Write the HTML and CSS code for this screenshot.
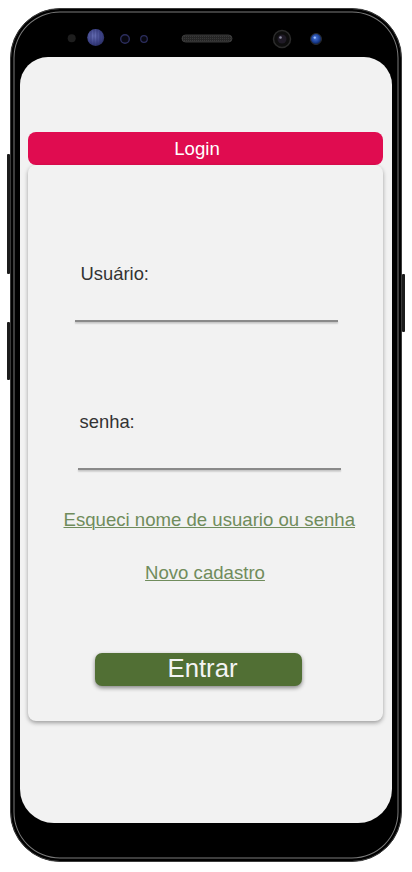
FILE: index.html
```html
<!DOCTYPE html>
<html lang="pt-BR">
<head>
<meta charset="utf-8">
<title>Login</title>
<link rel="stylesheet" href="styles.css">
</head>
<body>
<div class="phone">
  <span class="side-btn side-btn-l1"></span>
  <span class="side-btn side-btn-l2"></span>
  <span class="side-btn side-btn-r"></span>
  <svg class="bezel-top" width="372" height="49" viewBox="0 0 372 49" aria-hidden="true">
    <defs>
      <radialGradient id="lensG" cx="0.4" cy="0.4" r="0.7">
        <stop offset="0" stop-color="#6a72b8"/>
        <stop offset="0.6" stop-color="#3e4488"/>
        <stop offset="1" stop-color="#262a5a"/>
      </radialGradient>
      <radialGradient id="blueG" cx="0.45" cy="0.4" r="0.6">
        <stop offset="0" stop-color="#4a78e0"/>
        <stop offset="0.7" stop-color="#173a8c"/>
        <stop offset="1" stop-color="#0c1c44"/>
      </radialGradient>
      <pattern id="mesh" width="2" height="2" patternUnits="userSpaceOnUse">
        <rect width="2" height="2" fill="#262626"/>
        <rect width="1" height="1" fill="#3a3a3a"/>
      </pattern>
    </defs>
    <circle cx="51.7" cy="30.3" r="4" fill="#1e1e1e"/>
    <circle cx="75.7" cy="29.5" r="8.5" fill="url(#lensG)"/>
    <path d="M71 23 v13 M74 21.5 v16 M77 21.5 v16 M80 23 v13" stroke="#2f3470" stroke-width="0.8" opacity="0.7"/>
    <circle cx="105" cy="31" r="4.3" fill="#07070f" stroke="#2c2e5e" stroke-width="1.4"/>
    <circle cx="124" cy="31" r="3.3" fill="#07070f" stroke="#2c2e5e" stroke-width="1.2"/>
    <rect x="162" y="27" width="50" height="7" rx="3.5" fill="url(#mesh)" stroke="#444" stroke-width="0.8"/>
    <circle cx="262" cy="31" r="8.5" fill="#0d0d0d" stroke="#2b2b2b" stroke-width="1.5"/>
    <circle cx="262" cy="31" r="4.5" fill="#1f1a26"/>
    <circle cx="260.5" cy="29.5" r="1.3" fill="#8a8aa0"/>
    <circle cx="296" cy="31" r="5.5" fill="url(#blueG)" stroke="#2a2a2a" stroke-width="1"/>
    <circle cx="294.8" cy="29.6" r="1.2" fill="#9fc0ff"/>
  </svg>
  <main class="screen">
    <div class="login-head">Login</div>
    <form class="card">
      <label class="field field-user">
        <span class="field-label">Usuário:</span>
        <input class="field-input" type="text">
        <span class="field-line"></span>
      </label>
      <label class="field field-pass">
        <span class="field-label">senha:</span>
        <input class="field-input" type="password">
        <span class="field-line"></span>
      </label>
      <a class="link link-forgot" href="#">Esqueci nome de usuario ou senha</a>
      <a class="link link-new" href="#">Novo cadastro</a>
      <button class="enter-btn" type="button">Entrar</button>
    </form>
  </main>
</div>
</body>
</html>
```
FILE: styles.css
```css
html, body {
  margin: 0;
  padding: 0;
  background: #ffffff;
}

body {
  font-family: "Liberation Sans", Arial, sans-serif;
  width: 412px;
  height: 872px;
  overflow: hidden;
}

.phone {
  position: relative;
  box-sizing: border-box;
  width: 392px;
  height: 854px;
  margin: 8px 0 0 10px;
  padding: 0 8.5px;
  display: flex;
  flex-direction: column;
  background: #000;
  border-radius: 50px;
  border: 1.5px solid #3a3a3a;
  box-shadow: inset 0 0 0 2.5px #000, inset 0 0 0 3.5px #7a7a7a, inset 0 0 0 6px #000;
}

.side-btn {
  position: absolute;
  width: 3px;
  background: #1c1c1c;
  border-radius: 1px;
}
.side-btn-l1 { left: -4px; top: 145px; height: 120px; }
.side-btn-l2 { left: -4px; top: 313px; height: 58px; }
.side-btn-r  { right: -4px; top: 265px; height: 58px; }

.bezel-top {
  display: block;
  flex: 0 0 auto;
  margin-top: -1.5px;
}

.screen {
  box-sizing: border-box;
  width: 372px;
  height: 766px;
  padding: 75px 9px 0 8px;
  background: #f2f2f2;
  border-radius: 28px 28px 34px 34px;
}

.login-head {
  height: 33px;
  line-height: 33px;
  padding-right: 16px;
  background: #e00c50;
  color: #ffffff;
  text-align: center;
  font-size: 18.6px;
  border-radius: 8px;
}

.card {
  box-sizing: border-box;
  height: 556px;
  margin: 0;
  padding: 98px 0 0 0;
  display: flex;
  flex-direction: column;
  align-items: flex-start;
  background: #f2f2f2;
  border-radius: 8px;
  box-shadow: 0 2px 4px rgba(0, 0, 0, 0.35);
}

.field {
  display: flex;
  flex-direction: column;
  align-items: flex-start;
}

.field-label {
  font-size: 18.4px;
  line-height: 21px;
  color: #333333;
}

.field-input {
  box-sizing: border-box;
  display: block;
  width: 263px;
  height: 36px;
  margin: 0;
  padding: 0;
  border: 0;
  background: transparent;
  outline: none;
  font: inherit;
  -webkit-appearance: none;
  appearance: none;
}

.field-line {
  display: block;
  width: 263px;
  height: 2px;
  background: #8a8a8a;
  box-shadow: 0 1.5px 1.5px rgba(0, 0, 0, 0.22);
}

.field-user .field-label { margin-left: 53px; }
.field-user .field-input,
.field-user .field-line { margin-left: 47px; }

.field-pass { margin-top: 89px; }
.field-pass .field-label { margin-left: 52px; }
.field-pass .field-input,
.field-pass .field-line { margin-left: 50px; }

.link {
  font-size: 18.6px;
  line-height: 21px;
  color: #708c5c;
  text-decoration: underline;
  text-decoration-thickness: 1px;
}

.link-forgot {
  margin-top: 39px;
  margin-left: 36px;
}

.link-new {
  margin-top: 32px;
  align-self: center;
}

.enter-btn {
  margin-top: 70px;
  margin-left: 67px;
  width: 207px;
  height: 33px;
  padding: 0 0 3px 9px;
  border: 0;
  border-radius: 7px;
  background: #516f34;
  color: #f4f4f4;
  font-family: "Liberation Sans", Arial, sans-serif;
  font-size: 25.7px;
  line-height: 30px;
  box-shadow: 0 2px 4px rgba(0, 0, 0, 0.45);
}
```
